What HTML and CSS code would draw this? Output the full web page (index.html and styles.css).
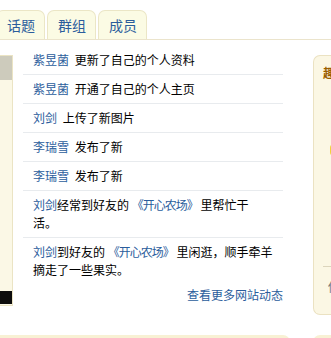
FILE: index.html
```html
<!DOCTYPE html>
<html lang="zh-CN">
<head>
<meta charset="utf-8">
<title>动态</title>
<link rel="stylesheet" href="styles.css">
</head>
<body>
<div class="page">
  <div class="tabs">
    <a class="tab first">话题</a>
    <a class="tab">群组</a>
    <a class="tab">成员</a>
  </div>
  <div class="main">
    <div class="left">
      <div class="photo-top"></div>
      <div class="photo-mid"></div>
      <div class="photo-bottom"></div>
    </div>
    <div class="feed">
      <ul class="list">
        <li><a class="name">紫昱菌</a> 更新了自己的个人资料</li>
        <li><a class="name">紫昱菌</a> 开通了自己的个人主页</li>
        <li><a class="name">刘剑</a> 上传了新图片</li>
        <li><a class="name">李瑞雪</a> 发布了新</li>
        <li><a class="name">李瑞雪</a> 发布了新</li>
        <li class="long"><a class="name">刘剑</a>经常到好友的 <a class="name book">《开心农场》</a> 里帮忙干<br>活。</li>
        <li class="long last"><a class="name">刘剑</a>到好友的 <a class="name book">《开心农场》</a> 里闲逛，顺手牵羊<br>摘走了一些果实。</li>
      </ul>
      <div class="more"><a class="name">查看更多网站动态</a></div>
    </div>
    <div class="right">
      <div class="right-title">趣味</div>
      <div class="right-icon"></div>
      <div class="right-sep"></div>
      <div class="right-text">你</div>
    </div>
  </div>
  <div class="bottom">
    <div class="strip wide"></div>
    <div class="strip narrow"></div>
  </div>
</div>
</body>
</html>
```

FILE: styles.css
```css
html, body {
  margin: 0;
  padding: 0;
  background: #fff;
}
body {
  font-family: "Noto Sans CJK SC", "Liberation Sans", sans-serif;
  font-size: 12px;
  color: #000;
  overflow: hidden;
}
.page {
  width: 331px;
  height: 338px;
  overflow: hidden;
}
.tabs {
  display: flex;
  gap: 2px;
  height: 29px;
  padding-top: 10px;
  border-bottom: 1px solid #ebe4cc;
}
.tab {
  display: flex;
  align-items: center;
  justify-content: center;
  padding: 0 9px 0 10px;
  height: 28px;
  font-size: 14px;
  color: #2b5d9c;
  background: #fbfbe4;
  border: 1px solid #ebe6c6;
  border-bottom: none;
  border-radius: 7px 7px 0 0;
  line-height: 1;
}
.tab.first {
  margin-left: -4px;
  padding-left: 10px;
}
.main {
  display: flex;
  align-items: flex-start;
}
.left {
  flex-shrink: 0;
  width: 12px;
  margin-top: 15px;
  height: 249px;
  background: #fbf8e6;
  border: 1px solid #ebe4c4;
  border-left: none;
  display: flex;
  flex-direction: column;
}
.photo-top {
  height: 24px;
  background: #cdcbbc;
}
.photo-mid {
  flex: 1;
}
.photo-bottom {
  height: 13px;
  margin-bottom: 1px;
  background: #0d0d0d;
}
.feed {
  flex-shrink: 0;
  width: 260px;
  margin-left: 10px;
  padding-top: 6px;
}
.list {
  list-style: none;
  margin: 0;
  padding: 0;
}
.list li {
  padding: 5px 0 5px 10px;
  line-height: 18px;
  border-bottom: 1px solid #e8ebee;
  white-space: nowrap;
  word-spacing: 3px;
}
.list li.long {
  word-spacing: 0;
}
.list li.last {
  border-bottom: none;
}
.name {
  color: #2b5d9c;
  text-decoration: none;
}
.book {
  letter-spacing: -1px;
}
.more {
  text-align: right;
  line-height: 18px;
  margin-top: 2px;
}
.right {
  flex-shrink: 0;
  margin-left: 30px;
  margin-top: 15px;
  width: 60px;
  height: 258px;
  background: #fbf7e4;
  border: 1px solid #ebe2c2;
  border-right: none;
  border-radius: 7px 0 0 7px;
  padding-left: 9px;
  overflow: hidden;
}
.right-title {
  margin-top: 10px;
  font-size: 12px;
  font-weight: bold;
  color: #9a5e00;
  white-space: nowrap;
  line-height: 14px;
}
.right-icon {
  margin-top: 64px;
  margin-left: 7px;
  width: 8px;
  height: 12px;
  border-radius: 4px;
  background: #f3d23a;
}
.right-sep {
  margin-top: 110px;
  border-top: 1px solid #dcd5bc;
}
.right-text {
  margin-top: 13px;
  margin-left: 5px;
  color: #777;
  line-height: 14px;
}
.bottom {
  display: flex;
  margin-top: 20px;
}
.strip {
  flex-shrink: 0;
  height: 10px;
  background: #f8f1d4;
}
.strip.wide {
  width: 290px;
  border-radius: 0 7px 0 0;
}
.strip.narrow {
  margin-left: 23px;
  width: 60px;
  border-radius: 7px 0 0 0;
}
```
